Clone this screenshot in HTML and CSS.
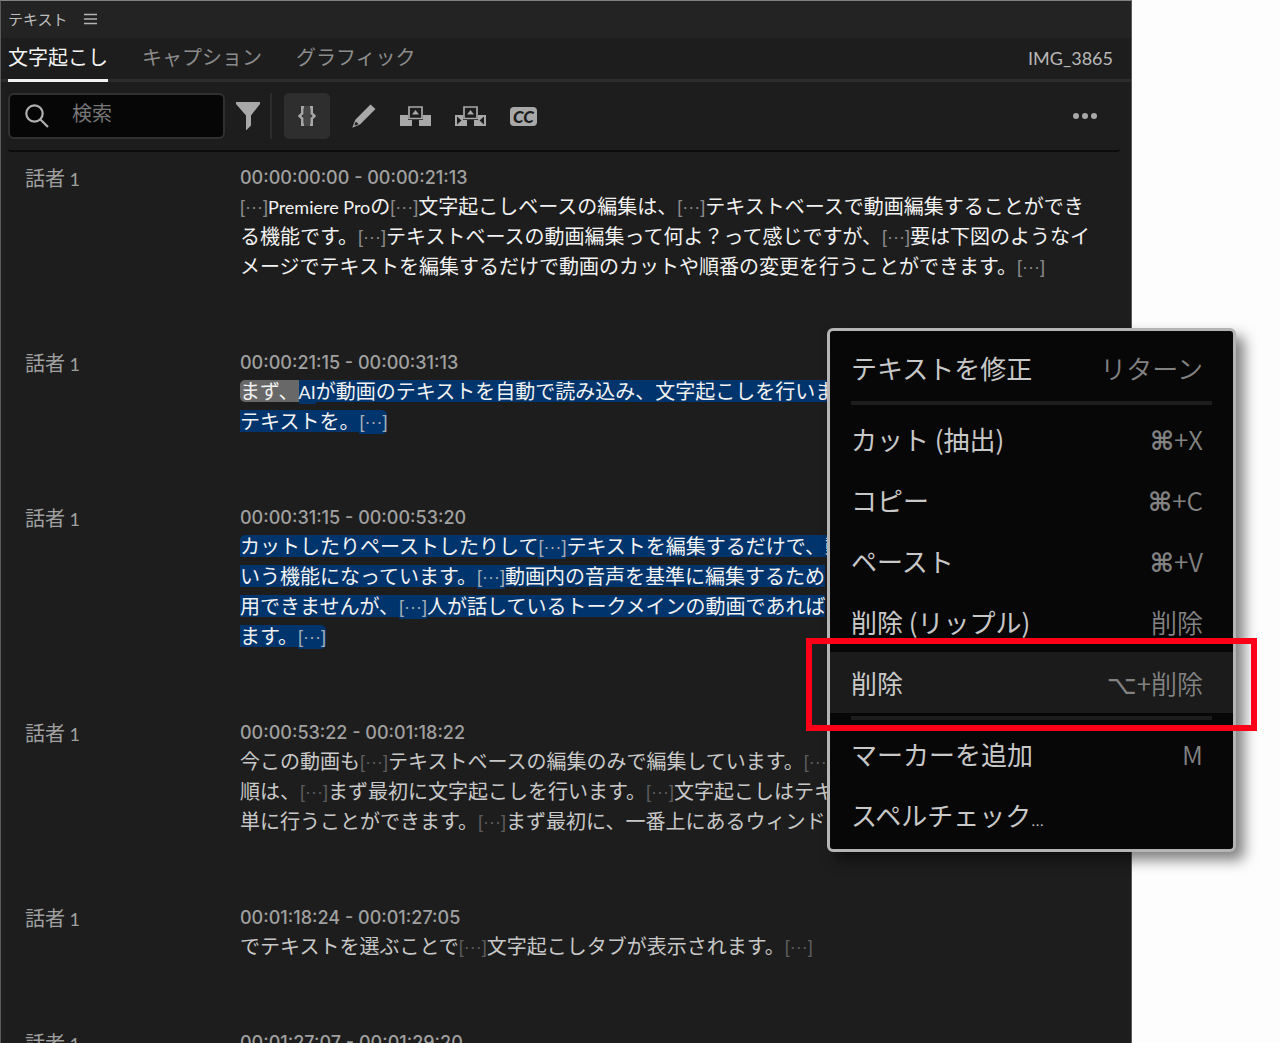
FILE: index.html
```html
<!DOCTYPE html>
<html lang="ja">
<head>
<meta charset="utf-8">
<meta name="viewport" content="width=device-width, initial-scale=1">
<title>テキスト</title>
<link rel="stylesheet" href="styles.css">
</head>
<body>
<main class="panel">
  <header class="panel-title">
    <h1>テキスト</h1>
    <button class="plain" aria-label="パネルメニュー">
      <svg width="13" height="12" viewBox="0 0 13 12"><path d="M0 1.5h13M0 6h13M0 10.5h13" stroke="#b4b4b4" stroke-width="1.4"/></svg>
    </button>
  </header>

  <nav class="tabs">
    <button class="tab active">文字起こし</button>
    <button class="tab">キャプション</button>
    <button class="tab">グラフィック</button>
    <span class="clip-name latin">IMG_3865</span>
  </nav>

  <div class="toolbar">
    <label class="search">
      <svg width="24" height="24" viewBox="0 0 24 24" fill="none" stroke="#b0b0b0" stroke-width="2.2"><circle cx="9.5" cy="9.5" r="8.2"/><path d="M15.5 15.5L23 23"/></svg>
      <input type="text" placeholder="検索" aria-label="検索">
    </label>
    <button class="plain filter" aria-label="フィルター">
      <svg width="24" height="28" viewBox="0 0 24 28"><path d="M0 0H24V2L15 13.5V23.5L10.5 28H10V13.5L0 2Z" fill="#a8a8a8"/></svg>
    </button>
    <button class="plain pauses" aria-label="間を表示">
      <svg width="18" height="20" viewBox="0 0 18 20"><path d="M5 0h8v20H5z" fill="#444"/><path d="M6 1H4.200V7.500L1.500 10L4.200 12.500V19H6M12 1h1.800V7.500L16.500 10L13.800 12.500V19H12" fill="none" stroke="#a8a8a8" stroke-width="2.400"/></svg>
    </button>
    <button class="plain" aria-label="編集">
      <svg width="24" height="24" viewBox="0 0 24 24"><path d="M18.500 0.500L23.500 5L8 20.500L0.300 23.700L3.300 15.700Z" fill="#a8a8a8"/><path d="M3.800 17.500L6.700 20.300L3 21.600L2.500 21Z" fill="#1d1d1d"/></svg>
    </button>
    <button class="plain" aria-label="リフト">
      <svg width="31" height="20" viewBox="0 0 31 20"><path d="M0 9H8V14H12V20H0ZM23 9H31V20H19V14H23Z" fill="#a8a8a8"/><path d="M9 1H22V12.500H9Z" fill="#1d1d1d" stroke="#a8a8a8" stroke-width="1.700"/><path d="M12 8.500L15.500 4L19 8.500Z" fill="#a8a8a8"/></svg>
    </button>
    <button class="plain" aria-label="抽出">
      <svg width="31" height="20" viewBox="0 0 31 20"><path d="M0 9H8V14H12V20H0ZM23 9H31V20H19V14H23Z" fill="#a8a8a8"/><path d="M9 1H22V12.500H9Z" fill="#1d1d1d" stroke="#a8a8a8" stroke-width="1.700"/><path d="M12 8.500L15.500 4L19 8.500Z" fill="#a8a8a8"/><path d="M2 10.500L6.500 14.500L2 18.500ZM29 10.500L24.500 14.500L29 18.500Z" fill="#1d1d1d"/></svg>
    </button>
    <button class="plain cc" aria-label="キャプションの作成">CC</button>
    <button class="plain more" aria-label="その他">
      <svg width="24" height="6" viewBox="0 0 24 6" fill="#a8a8a8"><circle cx="3" cy="3" r="3"/><circle cx="12" cy="3" r="3"/><circle cx="21" cy="3" r="3"/></svg>
    </button>
  </div>

  <section class="transcript">
    <article class="segment bright">
      <span class="speaker">話者<span class="latin"> 1</span></span>
      <div class="body">
        <time>00:00:00:00 - 00:00:21:13</time>
        <p><i>[···]</i><span class="latin">Premiere Pro</span>の<i>[···]</i>文字起こしベースの編集は、<i>[···]</i>テキストベースで動画編集することができ<br>る機能です。<i>[···]</i>テキストベースの動画編集って何よ？って感じですが、<i>[···]</i>要は下図のようなイ<br>メージでテキストを編集するだけで動画のカットや順番の変更を行うことができます。<i>[···]</i></p>
      </div>
    </article>
    <article class="segment bright">
      <span class="speaker">話者<span class="latin"> 1</span></span>
      <div class="body">
        <time>00:00:21:15 - 00:00:31:13</time>
        <p><mark class="cursor">まず、</mark><mark class="tall latin">AI</mark><mark>が動画のテキストを自動で読み込み、文字起こしを行いま</mark><br><mark>テキストを。</mark><i class="picked end">[···]</i></p>
      </div>
    </article>
    <article class="segment bright">
      <span class="speaker">話者<span class="latin"> 1</span></span>
      <div class="body">
        <time>00:00:31:15 - 00:00:53:20</time>
        <p><mark class="start">カットしたりペーストしたりして</mark><i class="picked">[···]</i><mark>テキストを編集するだけで、動</mark><br><mark>いう機能になっています。</mark><i class="picked">[···]</i><mark>動画内の音声を基準に編集するため</mark><br><mark>用できませんが、</mark><i class="picked">[···]</i><mark>人が話しているトークメインの動画であれば</mark><br><mark>ます。</mark><i class="picked end">[···]</i></p>
      </div>
    </article>
    <article class="segment">
      <span class="speaker">話者<span class="latin"> 1</span></span>
      <div class="body">
        <time>00:00:53:22 - 00:01:18:22</time>
        <p>今この動画も<i>[···]</i>テキストベースの編集のみで編集しています。<i>[···]</i><br>順は、<i>[···]</i>まず最初に文字起こしを行います。<i>[···]</i>文字起こしはテキ<br>単に行うことができます。<i>[···]</i>まず最初に、一番上にあるウィンド</p>
      </div>
    </article>
    <article class="segment">
      <span class="speaker">話者<span class="latin"> 1</span></span>
      <div class="body">
        <time>00:01:18:24 - 00:01:27:05</time>
        <p>でテキストを選ぶことで<i>[···]</i>文字起こしタブが表示されます。<i>[···]</i></p>
      </div>
    </article>
    <article class="segment">
      <span class="speaker">話者<span class="latin"> 1</span></span>
      <div class="body">
        <time>00:01:27:07 - 00:01:29:20</time>
      </div>
    </article>
  </section>
</main>

<div class="menu" role="menu">
  <button class="item" role="menuitem"><span>テキストを修正</span><kbd>リターン</kbd></button>
  <hr>
  <button class="item" role="menuitem"><span>カット (抽出)</span><kbd><b>⌘</b>+X</kbd></button>
  <button class="item" role="menuitem"><span>コピー</span><kbd><b>⌘</b>+C</kbd></button>
  <button class="item" role="menuitem"><span>ペースト</span><kbd><b>⌘</b>+V</kbd></button>
  <button class="item" role="menuitem"><span>削除 (リップル)</span><kbd>削除</kbd></button>
  <button class="item hover" role="menuitem"><span>削除</span><kbd><b>⌥</b>+削除</kbd></button>
  <hr>
  <button class="item" role="menuitem"><span>マーカーを追加</span><kbd>M</kbd></button>
  <button class="item" role="menuitem"><span>スペルチェック<small>...</small></span></button>
</div>
</body>
</html>
```

FILE: styles.css
```css
* { box-sizing: border-box; }

body {
  position: relative;
  margin: 0;
  padding-right: 148px;
  height: 100vh;
  overflow: hidden;
  background: #fdfdfd;
  color: #c8c8c8;
  font: 20px/30px "Noto Sans CJK JP", sans-serif;
}

button, input { font: inherit; color: inherit; }
button { margin: 0; padding: 0; border: 0; background: none; }
svg { display: block; }
p, h1 { margin: 0; font-weight: 400; }
.latin { font-family: Lato, sans-serif; font-size: 18px; }
.segment .latin { line-height: 1; }

.panel {
  min-height: 100%;
  border: 1px solid #5a5a5a;
  border-top-color: #808282;
  border-bottom: 0;
  background: #1d1d1d;
}

.panel-title {
  display: flex;
  align-items: center;
  gap: 16px;
  height: 37px;
  padding: 0 7px 2px;
  background: #232323;
}
.panel-title h1 { font-size: 15px; color: #bdbdbd; }

.tabs {
  display: flex;
  gap: 34px;
  height: 44px;
  padding: 0 18px 0 7px;
  border-bottom: 3px solid #2c2c2c;
}
.tab {
  height: 44px;
  padding-bottom: 4px;
  border-bottom: 3px solid transparent;
  color: #8c8c8c;
}
.tab.active { border-color: #f2f2f2; color: #f5f5f5; }
.clip-name { margin-left: auto; padding-top: 5px; color: #b8b8b8; }

.toolbar {
  display: flex;
  align-items: center;
  gap: 24px;
  margin: 0 11px 0 7px;
  height: 70px;
  border-bottom: 2px solid #0c0c0c;
  border-radius: 3px;
}
.search {
  display: flex;
  align-items: center;
  gap: 23px;
  width: 217px;
  height: 46px;
  padding: 0 15px;
  border: 2px solid #303030;
  border-radius: 6px;
  background: #060606;
}
.search svg { flex: none; }
.search input {
  min-width: 0;
  width: 100%;
  padding: 0 0 6px;
  border: 0;
  outline: 0;
  background: none;
}
.search input::placeholder { color: #777; opacity: 1; }
.filter {
  display: flex;
  align-items: center;
  margin: 0 -12px 0 -13px;
  width: 36px;
  height: 46px;
  border-right: 2px solid #2c2c2c;
}
.pauses {
  display: grid;
  place-items: center;
  width: 46px;
  height: 46px;
  margin-right: -2px;
  border-radius: 5px;
  background: #2e2e2e;
}
.toolbar .cc {
  width: 27px;
  height: 19px;
  border-radius: 4px;
  background: #a8a8a8;
  color: #1d1d1d;
  font: italic 900 17px/19px Lato, sans-serif;
}
.more { margin-left: auto; margin-right: 23px; }

.transcript { padding-top: 12px; }
.segment {
  display: grid;
  grid-template-columns: 215px 1fr;
  padding: 0 24px 68px;
  white-space: nowrap;
}
.speaker, time { color: #a0a0a0; line-height: 27px; }
time { display: block; font: 500 18px/27px Inter, sans-serif; }
.bright p { color: #f2f2f2; }

/* Pause marker between spoken words */
.segment i {
  display: inline-block;
  width: 28px;
  vertical-align: 1px;
  text-align: center;
  font: 18px/24px "Liberation Sans", sans-serif;
  color: #5c5c5c;
}
.bright i { color: #8a8a8a; }
.bright .picked { background: #00346c; color: #a4acb4; }

mark {
  display: inline-block;
  line-height: 22px;
  background: #00346c;
  color: inherit;
}
.segment .tall { line-height: 24px; }
mark.cursor { border-radius: 5px 0 0 5px; background: #686868; }
mark.start { border-radius: 5px 0 0 0; }
.end { border-radius: 0 5px 5px 0; }

.menu {
  position: absolute;
  top: 328px;
  right: 44px;
  width: 409px;
  padding: 6px 0 4px;
  border: 3px solid #b4b4b4;
  border-radius: 6px;
  background: #070707;
  box-shadow: 8px 8px 14px rgba(0, 0, 0, .5);
  font-size: 26px;
  line-height: 32px;
}
.item {
  position: relative;
  display: flex;
  justify-content: space-between;
  align-items: center;
  width: 100%;
  height: 61px;
  padding: 0 30px 0 21px;
}
.item.hover { background: #1b1b1b; }
.item kbd { font: inherit; font-weight: 350; color: #828282; }
.item b { font: 700 26px/0 "DejaVu Sans", sans-serif; }
.item.hover b { font-weight: 400; }
.item small { font: 16px/0 Roboto, sans-serif; }
.menu hr {
  height: 4px;
  margin: 3px 21px;
  border: 0;
  background: #1d1d1d;
}
/* Callout frame around the chosen command */
.item.hover::after {
  content: "";
  position: absolute;
  z-index: 1;
  inset: -14px -24px -18px;
  border: 6px solid #fb0018;
}
```
